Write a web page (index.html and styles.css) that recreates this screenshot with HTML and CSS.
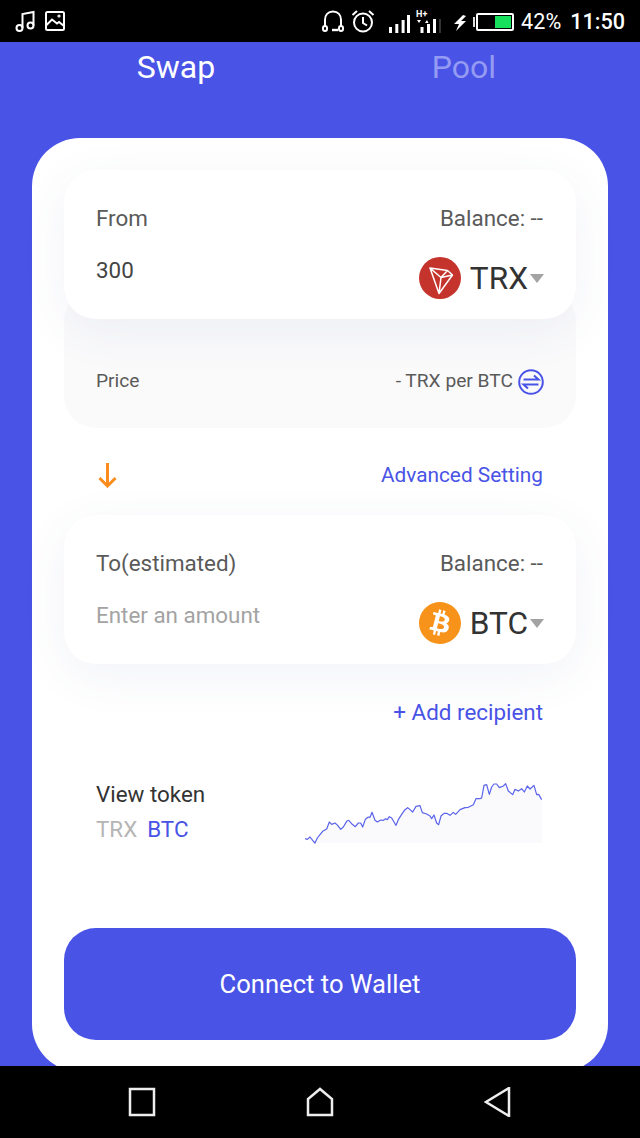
FILE: index.html
```html
<!DOCTYPE html>
<html lang="en">
<head>
<meta charset="UTF-8" />
<meta name="viewport" content="width=device-width, initial-scale=1" />
<title>Swap</title>
<link rel="stylesheet" href="styles.css">
</head>
<body>

  <div class="status-bar">
    <div class="status-left">
      <svg width="21" height="24" viewBox="0 0 21 24" class="line-icon"><circle cx="4.5" cy="19" r="3"/><circle cx="15.5" cy="16.5" r="3"/><path d="M7.5 19V5L18.5 3V16.5"/></svg>
      <svg width="20" height="20" viewBox="0 0 20 20" class="line-icon"><rect x="1" y="1" width="18" height="18" rx="1.5"/><path d="M1 14.5L7 8.5L12 12.5L14 11L19 15"/><circle cx="14" cy="5" r="0.6"/></svg>
    </div>
    <div class="status-right">
      <svg width="22" height="22" viewBox="0 0 22 22" class="line-icon"><path d="M3 17V10C3 5 6 1.5 11 1.5S19 5 19 10V17"/><rect x="1" y="16" width="4" height="5" rx="2"/><rect x="17" y="16" width="4" height="5" rx="2"/><path d="M10 20H16" stroke-width="2.4"/></svg>
      <svg width="24" height="24" viewBox="0 0 24 24" class="line-icon alarm"><circle cx="12" cy="13.5" r="9"/><path d="M12 8V14L16 16.5M1.5 6L6 2M22.5 6L18 2"/></svg>
      <svg width="22" height="18" viewBox="0 0 22 18" class="signal"><rect x="1" y="12" width="3" height="6"/><rect x="7.3" y="9" width="3" height="9"/><rect x="13.6" y="5" width="3" height="13"/><rect x="19" y="0" width="3" height="18"/></svg>
      <span class="net-wrap">
        <span class="net-type">H+</span>
        <svg width="24" height="14" viewBox="0 0 24 14" class="net-bars"><path d="M0 1H4L2 4ZM8 4L10 1L11.500 4Z"/><rect x="3.500" y="8" width="3" height="6"/><rect x="10" y="5" width="3" height="9"/><rect x="16" y="0" width="3" height="14"/><rect x="22" y="0" width="2" height="14" fill="#333"/></svg>
      </span>
      <svg width="14" height="16" viewBox="0 0 14 16" class="bolt"><path d="M10 0L1 9H6L3 16L13 6H8L13 1Z"/></svg>
      <div class="battery-wrap">
        <span class="battery-tip"></span>
        <span class="battery"><span class="battery-level"></span></span>
      </div>
      <span class="status-text pct">42%</span>
      <span class="status-text clock">11:50</span>
    </div>
  </div>

  <div class="main">
    <div class="tabs">
      <div class="tab active">Swap</div>
      <div class="tab">Pool</div>
    </div>

    <div class="card">
      <div class="token-box">
        <div class="box-head">
          <span>From</span>
          <span>Balance: --</span>
        </div>
        <div class="box-body">
          <span class="amount">300</span>
          <div class="token">
            <svg width="42" height="42" viewBox="0 0 42 42" class="token-logo">
              <circle cx="21" cy="21" r="21" fill="#c4342d"/>
              <path d="M11 11L28.500 13.500L33.500 18L20 36.500ZM11 11L22 20.500L20 36.500M22 20.500L33.500 18M28.500 13.500L22 20.500" fill="none" stroke="#fff" stroke-width="1.5" stroke-linejoin="round"/>
            </svg>
            <span class="token-name">TRX</span>
            <span class="caret"></span>
          </div>
        </div>
      </div>

      <div class="price-panel">
        <span class="price-text">Price</span>
        <div class="price-value">
          <span class="price-text">- TRX per BTC</span>
          <svg width="26" height="26" viewBox="0 0 26 26" class="swap-icon"><circle cx="13" cy="13" r="11.800"/><path d="M5.500 10.500H20.500L16 6.500M20.500 15.500H5.500L10 19.500"/></svg>
        </div>
      </div>

      <div class="setting-row">
        <svg width="22" height="26" viewBox="0 0 22 26" class="down-arrow"><path d="M10.500 1V24M2.500 16L10.500 24L18.500 16"/></svg>
        <a class="link">Advanced Setting</a>
      </div>

      <div class="token-box">
        <div class="box-head">
          <span>To(estimated)</span>
          <span>Balance: --</span>
        </div>
        <div class="box-body">
          <span class="amount placeholder">Enter an amount</span>
          <div class="token">
            <svg width="42" height="42" viewBox="0 0 24 24" class="token-logo"><path fill="#f7931a" d="M23.638 14.904c-1.602 6.43-8.113 10.34-14.542 8.736C2.67 22.05-1.244 15.525.362 9.105 1.962 2.67 8.475-1.243 14.9.358c6.43 1.605 10.342 8.115 8.738 14.548v-.002zm-6.35-4.613c.24-1.59-.974-2.45-2.64-3.03l.54-2.153-1.315-.33-.525 2.107c-.345-.087-.705-.167-1.064-.25l.526-2.127-1.32-.33-.54 2.165c-.285-.067-.565-.132-.84-.2l-1.815-.45-.35 1.407s.975.225.955.236c.535.136.63.486.615.766l-1.477 5.92c-.075.166-.24.406-.614.314.015.02-.96-.24-.96-.24l-.66 1.51 1.71.426.93.242-.54 2.19 1.32.327.54-2.17c.36.1.705.19 1.05.273l-.51 2.154 1.32.33.545-2.19c2.24.427 3.93.257 4.64-1.774.57-1.637-.03-2.58-1.217-3.196.854-.193 1.5-.76 1.68-1.93h.01zm-3.01 4.22c-.404 1.64-3.157.75-4.05.53l.72-2.9c.896.23 3.757.67 3.33 2.37zm.41-4.24c-.37 1.49-2.662.735-3.405.55l.654-2.64c.744.18 3.137.524 2.75 2.084v.006z"/></svg>
            <span class="token-name">BTC</span>
            <span class="caret"></span>
          </div>
        </div>
      </div>

      <div class="recipient-row">
        <a class="link">+ Add recipient</a>
      </div>

      <div class="view-row">
        <div class="view-text">
          <div class="view-title">View token</div>
          <div class="view-tokens"><span class="muted">TRX</span><span class="link">BTC</span></div>
        </div>
        <svg width="237" height="63" viewBox="45 35 711 189" class="chart">
          <path class="chart-fill" d="M45 205L52 207L60 200L68 210L75 218L82 203L90 193L98 183L110 176L118 155L125 162L135 158L143 165L152 177L160 170L170 153L176 150L185 160L196 169L205 158L212 158L218 170L226 147L235 140L240 141L246 126L255 150L262 155L272 149L280 150L287 145L292 148L298 139L305 143L312 155L318 165L325 148L335 132L345 118L353 112L360 118L368 125L378 108L390 106L397 127L410 131L420 137L425 145L432 134L440 158L446 163L453 137L462 129L470 129L480 135L490 126L497 132L510 118L525 112L535 111L550 103L558 85L570 85L575 83L582 45L590 43L598 72L605 50L612 41L620 41L628 52L640 47L647 40L655 62L668 73L675 57L685 62L695 55L703 65L712 47L720 56L732 45L740 73L746 72L755 88V218H75Z"/>
          <path class="chart-line" d="M45 205L52 207L60 200L68 210L75 218L82 203L90 193L98 183L110 176L118 155L125 162L135 158L143 165L152 177L160 170L170 153L176 150L185 160L196 169L205 158L212 158L218 170L226 147L235 140L240 141L246 126L255 150L262 155L272 149L280 150L287 145L292 148L298 139L305 143L312 155L318 165L325 148L335 132L345 118L353 112L360 118L368 125L378 108L390 106L397 127L410 131L420 137L425 145L432 134L440 158L446 163L453 137L462 129L470 129L480 135L490 126L497 132L510 118L525 112L535 111L550 103L558 85L570 85L575 83L582 45L590 43L598 72L605 50L612 41L620 41L628 52L640 47L647 40L655 62L668 73L675 57L685 62L695 55L703 65L712 47L720 56L732 45L740 73L746 72L755 88"/>
        </svg>
      </div>

      <button class="connect-btn">Connect to Wallet</button>
    </div>
  </div>

  <div class="nav-bar">
    <svg width="28" height="30" viewBox="0 0 28 30" class="nav-icon"><rect x="2" y="2" width="24" height="26"/></svg>
    <svg width="28" height="30" viewBox="0 0 28 30" class="nav-icon"><path d="M2 28V12L14 2L26 12V28Z"/></svg>
    <svg width="28" height="30" viewBox="0 0 28 30" class="nav-icon"><path d="M25 1V29L2 15Z"/></svg>
  </div>

</body>
</html>
```

FILE: styles.css
```css
* {
  box-sizing: border-box;
}

body {
  margin: 0;
  width: 640px;
  height: 1138px;
  overflow: hidden;
  font-family: Roboto, "Liberation Sans", sans-serif;
  background-color: #000;
  color: #5a5a5a;
}

/* Android status bar */
.status-bar {
  height: 42px;
  background-color: #000;
  display: flex;
  justify-content: space-between;
  align-items: center;
  padding: 0 15px;
}

.status-left,
.status-right {
  display: flex;
  align-items: center;
}

.status-left {
  gap: 9px;
}

.line-icon {
  fill: none;
  stroke: #fff;
  stroke-width: 2;
}

.alarm {
  margin-left: 7px;
}

.signal {
  fill: #fff;
  margin: 6px 0 0 13px;
}

.net-wrap {
  display: flex;
  align-items: flex-end;
  position: relative;
  width: 24px;
  height: 22px;
  margin: 2px 0 0 7px;
}

.net-type {
  position: absolute;
  top: -2px;
  left: -1px;
  font-size: 9px;
  line-height: 10px;
  font-weight: 700;
  color: #fff;
}

.net-bars {
  fill: #fff;
}

.bolt {
  fill: #fff;
  margin: 3px 0 0 12px;
}

.battery-wrap {
  display: flex;
  align-items: center;
  margin: 1px 0 0 6px;
}

.battery-tip {
  width: 2px;
  height: 10px;
  background-color: #ddd;
  margin-right: 1px;
}

.battery {
  width: 38px;
  height: 18px;
  border: 2px solid #fff;
  border-radius: 2px;
  padding: 1px;
  display: flex;
  justify-content: flex-end;
}

.battery-level {
  width: 16px;
  background-color: #17e05c;
}

.status-text {
  color: #fff;
  font-size: 21.6px;
}

.pct {
  margin-left: 7px;
}

.clock {
  margin-left: 9px;
  font-weight: 500;
}

/* Main area */
.main {
  height: 1024px;
  overflow: hidden;
  background-color: #4953e6;
  padding: 0 32px;
}

.tabs {
  display: grid;
  grid-template-columns: 1fr 1fr;
  height: 50px;
  margin-bottom: 46px;
}

.tab {
  text-align: center;
  font-size: 32px;
  line-height: 50px;
  color: #959bf2;
}

.tab.active {
  color: #fff;
}

.card {
  background-color: #fff;
  border-radius: 48px;
  padding: 32px;
}

.token-box {
  position: relative;
  background-color: #fff;
  border-radius: 32px;
  padding: 32px 32px 20px;
  box-shadow: 0 12px 48px rgba(70, 80, 160, 0.07);
}

.box-head {
  display: flex;
  justify-content: space-between;
  font-size: 22.4px;
  line-height: 32px;
  margin-bottom: 23px;
  padding-right: 1px;
}

.box-body {
  display: flex;
  justify-content: space-between;
  align-items: flex-start;
}

.amount {
  font-size: 22.4px;
  line-height: 26px;
  color: #444;
}

.amount.placeholder {
  color: #a3a3a3;
}

.token {
  display: flex;
  align-items: center;
  height: 42px;
}

.token-logo {
  margin-right: 8.5px;
}

.token-name {
  font-size: 31.6px;
  color: #333;
}

.caret {
  width: 0;
  height: 0;
  margin-left: 2px;
  border-left: 7.5px solid transparent;
  border-right: 7.5px solid transparent;
  border-top: 9px solid #a3a3a3;
}

.price-panel {
  margin-top: -30px;
  height: 139px;
  padding: 79px 32px 34px;
  background-color: #fafafb;
  border-radius: 32px;
  display: flex;
  justify-content: space-between;
  align-items: center;
  font-size: 19.2px;
}

.price-text {
  padding-bottom: 2px;
}

.price-value {
  display: flex;
  align-items: center;
  gap: 5px;
}

.swap-icon {
  fill: none;
  stroke: #4953e6;
  stroke-width: 2;
  margin-top: 1px;
}

.setting-row {
  height: 87px;
  padding: 6px 33px 0 32px;
  display: flex;
  justify-content: space-between;
  align-items: center;
}

.down-arrow {
  fill: none;
  stroke: #fb8c1d;
  stroke-width: 3;
  margin-left: 1px;
}

.link {
  color: #4953e6;
  font-size: 20.8px;
}

.recipient-row {
  margin-top: 35px;
  padding-right: 33px;
  text-align: right;
  line-height: 26px;
}

.recipient-row .link {
  font-size: 22.4px;
}

.view-row {
  margin-top: 51px;
  padding: 0 33px 0 32px;
  display: flex;
  justify-content: space-between;
  align-items: flex-end;
}

.view-text {
  padding-bottom: 1px;
}

.view-title {
  font-size: 22.4px;
  line-height: 30px;
  color: #333;
}

.view-tokens {
  margin-top: 5px;
  display: flex;
  gap: 10px;
  font-size: 22.4px;
  line-height: 30px;
}

.view-tokens .link {
  font-size: 22.4px;
}

.muted {
  color: #b5b5b5;
}

.chart {
  margin-right: 1px;
}

.chart-fill {
  fill: #fafafd;
}

.chart-line {
  fill: none;
  stroke: #5a63ea;
  stroke-width: 3.6;
  stroke-linejoin: round;
}

.connect-btn {
  display: block;
  width: 100%;
  height: 112px;
  margin-top: 83px;
  border: none;
  border-radius: 32px;
  background-color: #4953e6;
  color: #fff;
  font-family: inherit;
  font-size: 25.6px;
}

/* Android nav bar */
.nav-bar {
  height: 72px;
  background-color: #000;
  display: flex;
  justify-content: center;
  align-items: center;
  gap: 150px;
}

.nav-icon {
  fill: none;
  stroke: #eee;
  stroke-width: 2.5;
}
```
